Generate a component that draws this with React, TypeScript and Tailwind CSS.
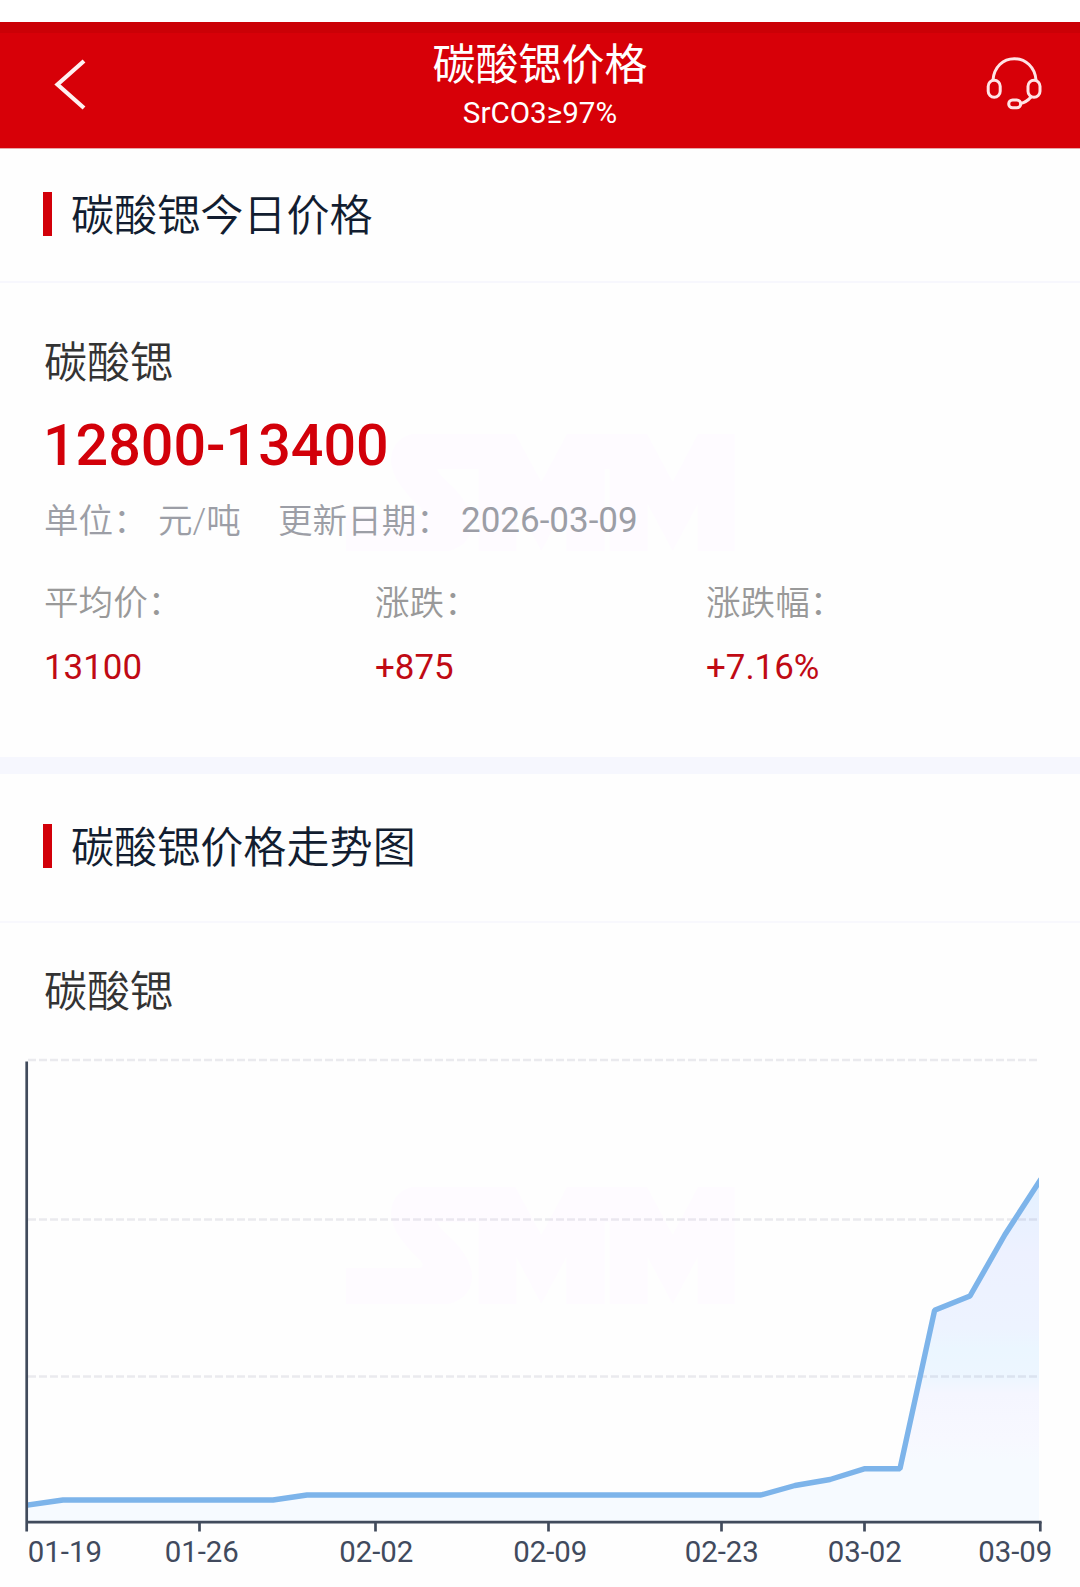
const stats = [
	{ label: "平均价：", value: "13100" },
	{ label: "涨跌：", value: "+875" },
	{ label: "涨跌幅：", value: "+7.16%" },
];

const gridLines = [20, 179.5, 336.5];

const ticks = [199.5, 375.5, 548.5, 721.5, 864.5, 1040.3];

const dates = [
	{ x: 27.8, text: "01-19" },
	{ x: 164.7, text: "01-26" },
	{ x: 339.2, text: "02-02" },
	{ x: 513.2, text: "02-09" },
	{ x: 684.7, text: "02-23" },
	{ x: 827.7, text: "03-02" },
	{ x: 978.2, text: "03-09" },
];

const line =
	"24,465.6 63,460 273,460 307,455 761,455 795,445.5 830,439.5 865,428.7 900,428.7 934.6,270.3 970,256 1005,194.5 1041,139";

function Watermark() {
	return (
		<svg
			className="absolute left-[346px] top-[150px] -z-10 h-[117px] w-[389px]"
			viewBox="77 108 1167 351"
			fill="#fefbff"
		>
			<path d="M275 108H585L663 252L740 108H980L1057 252L1133 108H1243V459H1132V318L1057 459L982 318V459H868V213H853V459H738V318L663 459L588 318V459H475V213H350C358 235 385 252 408 278C440 315 455 345 455 380C452 425 425 448 385 459H77V351H290Q318 351 300 328C250 280 216 240 212 190C212 145 235 118 275 108Z" />
		</svg>
	);
}

function SectionTitle({ text }: { text: string }) {
	return (
		<div className="flex items-center gap-[19px] pl-[43px]">
			<span className="h-[44px] w-[9px] bg-[#d20009]" />
			<h2 className="pt-[7px] text-[43.1px] font-[350] leading-[50px] text-[#121d30]">{text}</h2>
		</div>
	);
}

function PriceChart() {
	return (
		<svg className="block h-[547px] w-[1080px]" viewBox="0 0 1080 547">
			<defs>
				<linearGradient id="area" gradientUnits="userSpaceOnUse" x1="0" y1="136" x2="0" y2="482">
					<stop offset="0" stopColor="#e2f1ff" />
					<stop offset="0.13" stopColor="#e9f1ff" />
					<stop offset="0.22" stopColor="#edf1ff" />
					<stop offset="0.44" stopColor="#edf3ff" />
					<stop offset="0.5" stopColor="#ebf6ff" />
					<stop offset="0.58" stopColor="#edf6ff" />
					<stop offset="0.63" stopColor="#f5f6ff" />
					<stop offset="0.76" stopColor="#f7f8ff" />
					<stop offset="0.82" stopColor="#f6faff" />
					<stop offset="1" stopColor="#f6faff" />
				</linearGradient>
				<clipPath id="plot">
					<rect x="28" y="0" width="1011" height="482" />
				</clipPath>
			</defs>
			<g clipPath="url(#plot)">
				<polygon points={`${line} 1041,482 24,482`} fill="url(#area)" />
			</g>
			{gridLines.map((y) => (
				<line
					key={y}
					x1="28"
					x2="1037"
					y1={y}
					y2={y}
					stroke="#5a5a78"
					strokeOpacity="0.12"
					strokeWidth="2.7"
					strokeDasharray="8 3"
				/>
			))}
			<g clipPath="url(#plot)">
				<polyline points={line} fill="none" stroke="#7db4ea" strokeWidth="5.4" strokeLinejoin="bevel" />
			</g>
			<path d="M26.7 21.5V491.5M25.4 482.2H1041.6" stroke="#414b5c" strokeWidth="2.7" fill="none" />
			{ticks.map((x) => (
				<path key={x} d={`M${x} 482V491.5`} stroke="#414b5c" strokeWidth="2.7" />
			))}
			<g fill="#414a5d" fontSize="29.4">
				{dates.map((d) => (
					<text key={d.text} x={d.x} y="522">
						{d.text}
					</text>
				))}
			</g>
		</svg>
	);
}

export default function App() {
	return (
		<div className="h-[1587px] w-[1080px] overflow-hidden bg-white font-['Roboto','Noto_Sans_CJK_SC',sans-serif]">
			<div className="h-[22px]" />
			<header className="flex h-[126px] justify-between border-t-[11px] border-[#cb0006] bg-[#d70008] text-white">
				<svg className="mt-[17px] ml-[44px] h-[68px] w-[56px]" viewBox="0 0 56 68" fill="none" stroke="#fff0f0" strokeWidth="4.2">
					<path d="M40 11L13.5 34.5L40 58" />
				</svg>
				<div className="pt-[7px] text-center">
					<h1 className="text-[43px] leading-[50px]">碳酸锶价格</h1>
					<p className="text-[29.6px] leading-[46px]">SrCO3≥97%</p>
				</div>
				<svg className="mt-[17px] mr-[24px] h-[68px] w-[76px]" viewBox="980 50 76 68" fill="none" stroke="#ffe4e6" strokeWidth="3">
					<path d="M993 80C994 67 1003 58.7 1014.3 58.7S1035 67 1036 80" />
					<rect x="988.2" y="80.3" width="12" height="17" rx="6" />
					<rect x="1028" y="80.3" width="12" height="17" rx="6" />
					<rect x="1008.7" y="100" width="12" height="7.8" rx="3.9" />
					<path d="M1020.5 103.5C1025 102.5 1028.5 100 1031 97" />
				</svg>
			</header>

			<div className="border-t border-[#e9a6a9] bg-[#fefefe]">
				<section className="relative isolate">
					<div className="h-[134px] border-b-2 border-[#f7f7fd] pt-[36px]">
						<SectionTitle text="碳酸锶今日价格" />
					</div>
					<div className="h-[474px] px-[44px] pt-[55px]">
						<div className="text-[43px] font-[350] leading-[50px] text-[#333]">碳酸锶</div>
						<div className="-ml-px pt-[23px] text-[57.4px] font-medium leading-[70px] text-[#d20009]">12800-13400</div>
						<div className="flex pt-[15px] text-[34.6px] leading-[50px] text-[#9c9ea6]">
							<span className="w-[114px] font-[350]">单位：</span>
							<span className="w-[120px] font-[350]">元/吨</span>
							<span className="w-[183px] font-[350]">更新日期：</span>
							<span className="text-[35px]">2026-03-09</span>
						</div>
						<div className="grid grid-cols-[331px_331px_1fr] pt-[32px] leading-[50px]">
							{stats.map((s) => (
								<div key={s.label}>
									<div className="text-[34.6px] font-[350] text-[#999]">{s.label}</div>
									<div className="pt-[15px] text-[34.9px] text-[#c00a14]">{s.value}</div>
								</div>
							))}
						</div>
					</div>
					<div className="absolute left-0 top-[135px] -z-10">
						<Watermark />
					</div>
				</section>

				<div className="h-[17px] bg-[#f6f7fe]" />

				<section className="relative isolate h-[813px]">
					<div className="h-[149px] border-b-2 border-[#f8f8fd] pt-[43px]">
						<SectionTitle text="碳酸锶价格走势图" />
					</div>
					<div className="px-[44px] pt-[44px] pb-[23px] text-[43px] font-[350] leading-[50px] text-[#333]">碳酸锶</div>
					<PriceChart />
					<div className="absolute left-0 top-[263px] -z-10">
						<Watermark />
					</div>
				</section>
			</div>
		</div>
	);
}
